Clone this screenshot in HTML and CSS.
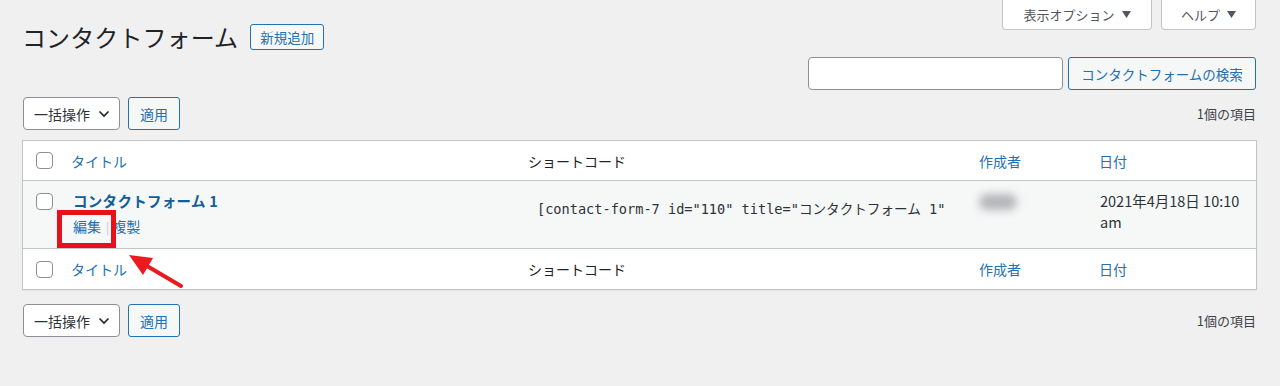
FILE: index.html
```html
<!DOCTYPE html>
<html lang="ja">
<head>
<meta charset="utf-8">
<title>コンタクトフォーム</title>
<link rel="stylesheet" href="styles.css">
</head>
<body>
<div class="page">
  <div class="top">
    <div class="heading">
      <h1 class="title">コンタクトフォーム</h1>
      <a class="btn-outline add-new">新規追加</a>
    </div>
    <div class="meta-links">
      <button class="meta-tab tab-options">表示オプション <svg class="tri" width="9" height="7" viewBox="0 0 9 7"><path d="M0 0h9L4.5 7z" fill="#50575e"/></svg></button>
      <button class="meta-tab tab-help">ヘルプ <svg class="tri" width="9" height="7" viewBox="0 0 9 7"><path d="M0 0h9L4.5 7z" fill="#50575e"/></svg></button>
    </div>
  </div>

  <div class="search-row">
    <div class="search-input"></div>
    <button class="btn-outline search-btn">コンタクトフォームの検索</button>
  </div>

  <div class="tablenav nav-top">
    <div class="actions">
      <div class="bulk-select">一括操作 <svg class="chev" width="12" height="8" viewBox="0 0 12 8"><path d="M1.5 1.5 6 6l4.5-4.5" fill="none" stroke="#1d2327" stroke-width="1.6"/></svg></div>
      <button class="btn-outline apply">適用</button>
    </div>
    <div class="count">1個の項目</div>
  </div>

  <div class="list-table">
    <div class="row head">
      <div class="cell check"><span class="cb"></span></div>
      <div class="cell link">タイトル</div>
      <div class="cell plain">ショートコード</div>
      <div class="cell link">作成者</div>
      <div class="cell link">日付</div>
    </div>
    <div class="row body">
      <div class="cell check"><span class="cb"></span></div>
      <div class="cell title-cell">
        <a class="row-title">コンタクトフォーム 1</a>
        <div class="row-actions"><a class="act">編集</a><span class="sep">|</span><a class="act">複製</a></div>
      </div>
      <div class="cell code-cell"><div class="code">[contact-form-7 id="110" title="コンタクトフォーム 1"</div></div>
      <div class="cell author-cell"><span class="blur"></span></div>
      <div class="cell date-cell">2021年4月18日 10:10<br>am</div>
    </div>
    <div class="row foot">
      <div class="cell check"><span class="cb"></span></div>
      <div class="cell link">タイトル</div>
      <div class="cell plain">ショートコード</div>
      <div class="cell link">作成者</div>
      <div class="cell link">日付</div>
    </div>
  </div>

  <div class="tablenav nav-bottom">
    <div class="actions">
      <div class="bulk-select">一括操作 <svg class="chev" width="12" height="8" viewBox="0 0 12 8"><path d="M1.5 1.5 6 6l4.5-4.5" fill="none" stroke="#1d2327" stroke-width="1.6"/></svg></div>
      <button class="btn-outline apply">適用</button>
    </div>
    <div class="count">1個の項目</div>
  </div>

  <div class="highlight-box"></div>
  <svg class="arrow" width="1280" height="386" viewBox="0 0 1280 386">
    <path d="M147 266 L181 286" stroke="#ea1a1f" stroke-width="4" stroke-linecap="round"/>
    <polygon points="129,255 153,258 143,275" fill="#ea1a1f"/>
  </svg>
</div>
</body>
</html>
```

FILE: styles.css
```css
* { box-sizing: border-box; }
html, body {
  margin: 0;
  padding: 0;
  background: #f0f0f1;
}
body {
  font-family: "Noto Sans CJK JP", "Noto Sans", sans-serif;
  color: #1d2327;
  font-size: 14px;
}
.page {
  position: relative;
  width: 1280px;
  height: 386px;
  padding: 0 23px 0 22px;
  overflow: hidden;
}
.top {
  display: flex;
  justify-content: space-between;
  align-items: flex-start;
  height: 50px;
}
.heading {
  display: flex;
  align-items: center;
  padding-top: 24px;
  gap: 12px;
}
.title {
  margin: 0;
  font-size: 24px;
  font-weight: 400;
  line-height: 26px;
  letter-spacing: 0.1px;
  color: #1d2327;
}
.btn-outline {
  display: inline-flex;
  align-items: center;
  justify-content: center;
  border: 1px solid #2271b1;
  border-radius: 3px;
  background: #f6f7f7;
  color: #2271b1;
  font-family: inherit;
  font-size: 13px;
  padding: 0;
  cursor: pointer;
}
.add-new {
  height: 26px;
  width: 74px;
  padding: 0;
  font-size: 13.5px;
}
.meta-links {
  display: flex;
  gap: 9px;
  padding-right: 1px;
}
.meta-tab {
  display: inline-flex;
  align-items: center;
  justify-content: center;
  gap: 7px;
  height: 30px;
  background: #fff;
  border: 1px solid #c3c4c7;
  border-top: none;
  border-radius: 0 0 4px 4px;
  font-family: inherit;
  font-size: 13px;
  color: #50575e;
  padding: 0;
}
.tab-options { width: 150px; }
.tab-help { width: 95px; }
.tri { display: block; }

.search-row {
  display: flex;
  justify-content: flex-end;
  gap: 5px;
  margin-top: 7px;
  padding-right: 1px;
}
.search-input {
  width: 255px;
  height: 33px;
  background: #fff;
  border: 1px solid #8c8f94;
  border-radius: 4px;
}
.search-btn {
  width: 188px;
  height: 33px;
  font-size: 13.5px;
}

.tablenav {
  display: flex;
  justify-content: space-between;
  align-items: center;
  height: 33px;
}
.nav-top { margin-top: 7px; }
.nav-bottom { margin-top: 14px; }
.actions {
  display: flex;
  gap: 8px;
  padding-left: 1px;
}
.bulk-select {
  display: flex;
  align-items: center;
  justify-content: space-between;
  width: 97px;
  height: 33px;
  padding: 0 9px 0 10px;
  background: #fff;
  border: 1px solid #8c8f94;
  border-radius: 4px;
  font-size: 14px;
  color: #2c3338;
}
.chev { display: block; }
.apply {
  width: 52px;
  height: 33px;
  font-size: 14px;
}
.count {
  font-size: 13px;
  color: #3c434a;
  padding-right: 1px;
}

.list-table {
  margin-top: 10px;
  background: #fff;
  border: 1px solid #c3c4c7;
  box-shadow: 0 1px 1px rgba(0,0,0,0.04);
  width: 1235px;
}
.row {
  display: grid;
  grid-template-columns: 38px 457px 451px 120px 1fr;
}
.row.head {
  height: 40px;
  border-bottom: 1px solid #c3c4c7;
  align-items: center;
}
.row.body {
  height: 68px;
  background: #f6f7f7;
  border-bottom: 1px solid #c3c4c7;
  align-items: start;
}
.row.foot {
  height: 40px;
  align-items: center;
}
.cell {
  padding: 0 10px;
  font-size: 14px;
}
.cell.link { color: #2271b1; }
.cell.plain { color: #1d2327; }
.cell.check {
  padding: 0 0 0 13px;
  display: flex;
  align-items: center;
}
.row.body .cell.check { padding-top: 12px; }
.cb {
  display: block;
  width: 17px;
  height: 17px;
  border: 1px solid #8c8f94;
  border-radius: 4px;
  background: #fff;
}
.title-cell {
  padding: 9px 10px 0 12px;
}
.row-title {
  display: block;
  font-weight: 700;
  color: #135e96;
  line-height: 21px;
  font-size: 14.5px;
  letter-spacing: 0.3px;
}
.row-actions {
  display: flex;
  align-items: center;
  margin-top: 5px;
  font-size: 14px;
  line-height: 21px;
}
.act { color: #2271b1; }
.sep {
  color: #c3c4c7;
  margin: 0 3px 0 5px;
  font-size: 12px;
}
.code-cell {
  padding: 18px 0 0 19px;
}
.code {
  white-space: nowrap;
  font-family: "DejaVu Sans Mono", "Noto Sans CJK JP", monospace;
  font-size: 13.6px;
  line-height: 20px;
  color: #2c3338;
}
.author-cell {
  padding: 13px 0 0 10px;
}
.blur {
  display: block;
  width: 38px;
  height: 16px;
  border-radius: 8px;
  background: #b4b6b8;
  filter: blur(4px);
}
.date-cell {
  padding: 9px 10px 0 11px;
  line-height: 21px;
  color: #2c3338;
  font-size: 14.5px;
}

.highlight-box {
  position: absolute;
  left: 57px;
  top: 210px;
  width: 59px;
  height: 38px;
  border: 5px solid #e8101b;
}
.arrow {
  position: absolute;
  left: 0;
  top: 0;
  pointer-events: none;
}
```
